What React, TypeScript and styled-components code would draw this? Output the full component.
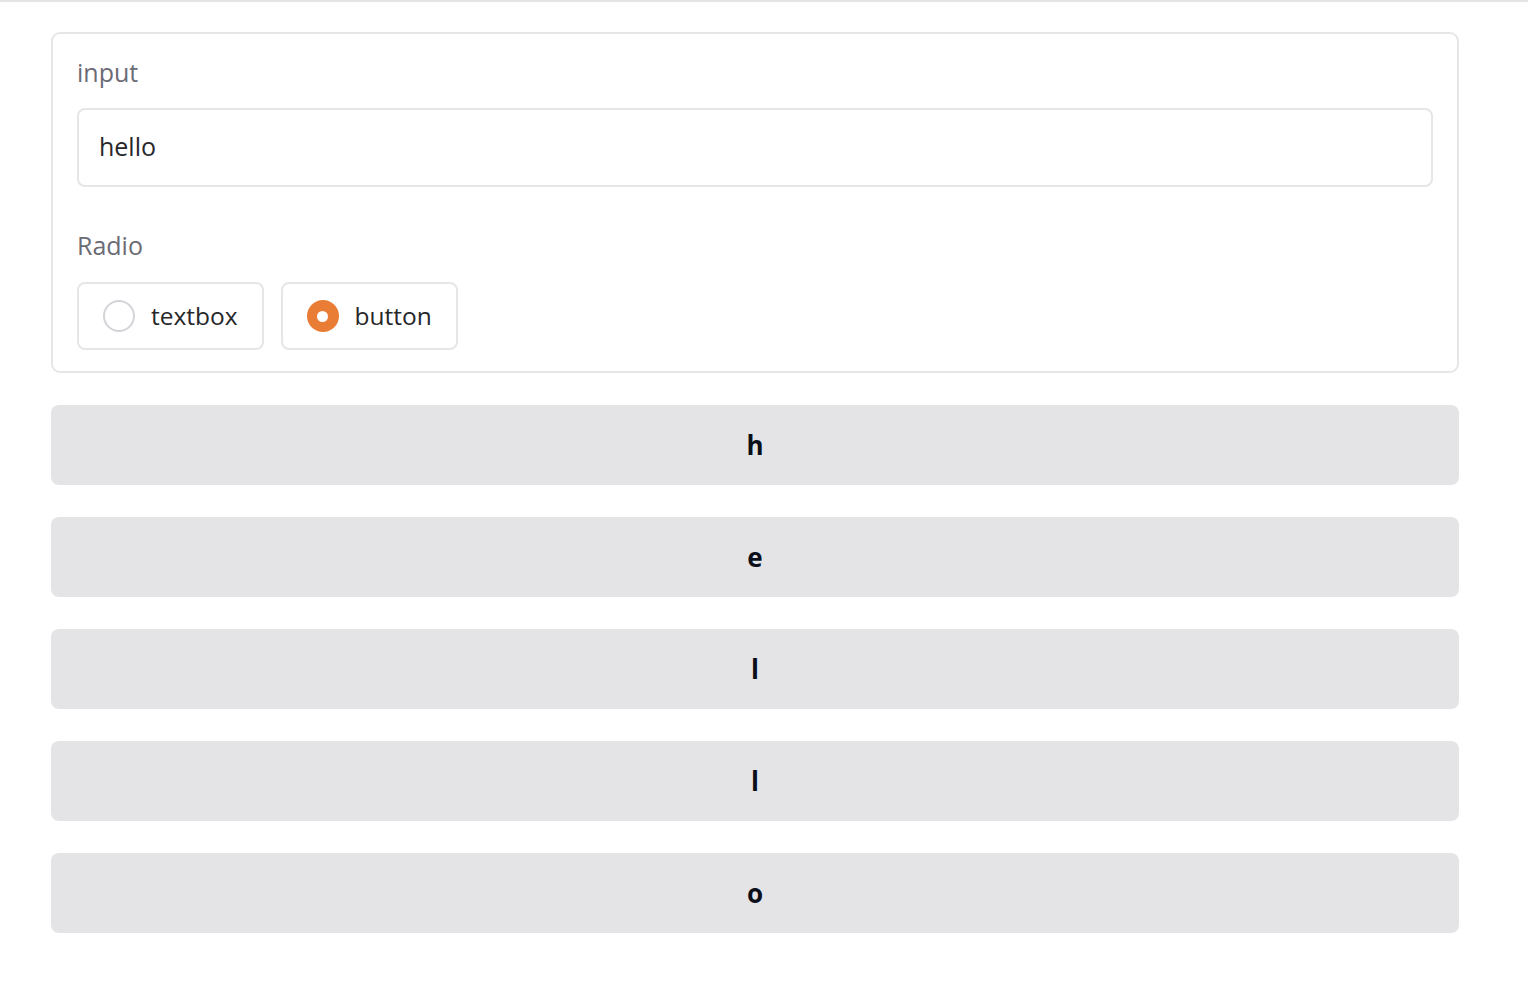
import React from "react";
import styled, { createGlobalStyle } from "styled-components";

const Global = createGlobalStyle`
  html, body { margin: 0; padding: 0; background: #ffffff; }
  body { font-family: "Open Sans", "Noto Sans", sans-serif; }
  * { box-sizing: border-box; }
`;

const TopRule = styled.div`
  height: 2px;
  background: #e4e4e7;
`;

const Page = styled.main`
  display: flex;
  flex-direction: column;
  gap: 32px;
  padding: 30px 69px 40px 51px;
`;

const Block = styled.section`
  display: flex;
  flex-direction: column;
  gap: 40px;
  border: 2px solid #e6e6e8;
  border-radius: 9px;
  padding: 20px 24px 21px 24px;
  background: #fff;
`;

const Field = styled.div<{ $gap: number }>`
  display: flex;
  flex-direction: column;
  gap: ${(p) => p.$gap}px;
`;

const Label = styled.span`
  font-size: 25px;
  line-height: 36px;
  color: #6b6b74;
`;

const TextInput = styled.input`
  height: 79px;
  width: 100%;
  border: 2px solid #e6e6e8;
  border-radius: 8px;
  padding: 0 20px 3px;
  font-family: inherit;
  font-size: 25px;
  color: #27272a;
  outline: none;
  background: #fff;
`;

const Options = styled.div`
  display: flex;
  gap: 17px;
`;

const Option = styled.label`
  display: flex;
  align-items: center;
  gap: 16px;
  height: 68px;
  padding: 0 24px;
  border: 2px solid #e6e6e8;
  border-radius: 8px;
  font-size: 24.5px;
  color: #27272a;
  cursor: pointer;
`;

const OptionText = styled.span`
  margin-top: -2px;
`;

const Dot = styled.span<{ $checked: boolean }>`
  width: 32px;
  height: 32px;
  border-radius: 50%;
  flex: none;
  display: flex;
  align-items: center;
  justify-content: center;
  border: ${(p) => (p.$checked ? "none" : "2px solid #d4d4d8")};
  background: ${(p) => (p.$checked ? "#ea7d36" : "#fff")};
  &::after {
    content: "";
    display: ${(p) => (p.$checked ? "block" : "none")};
    width: 11px;
    height: 11px;
    border-radius: 50%;
    background: #fff;
  }
`;

const LetterButton = styled.button`
  height: 80px;
  width: 100%;
  border: none;
  border-radius: 8px;
  background: #e4e4e7;
  font-family: inherit;
  font-size: 26px;
  font-weight: 700;
  color: #0b0f19;
  cursor: pointer;
`;

export default function App() {
  const [choice, setChoice] = React.useState("button");
  const [text, setText] = React.useState("hello");
  const options = ["textbox", "button"];
  return (
    <>
      <Global />
      <TopRule />
      <Page>
        <Block>
          <Field $gap={18}>
            <Label>input</Label>
            <TextInput value={text} onChange={(e) => setText(e.target.value)} />
          </Field>
          <Field $gap={19}>
            <Label>Radio</Label>
            <Options>
              {options.map((o) => (
                <Option key={o} onClick={() => setChoice(o)}>
                  <Dot $checked={choice === o} />
                  <OptionText>{o}</OptionText>
                </Option>
              ))}
            </Options>
          </Field>
        </Block>
        {text.split("").map((c, i) => (
          <LetterButton key={i}>{c}</LetterButton>
        ))}
      </Page>
    </>
  );
}
